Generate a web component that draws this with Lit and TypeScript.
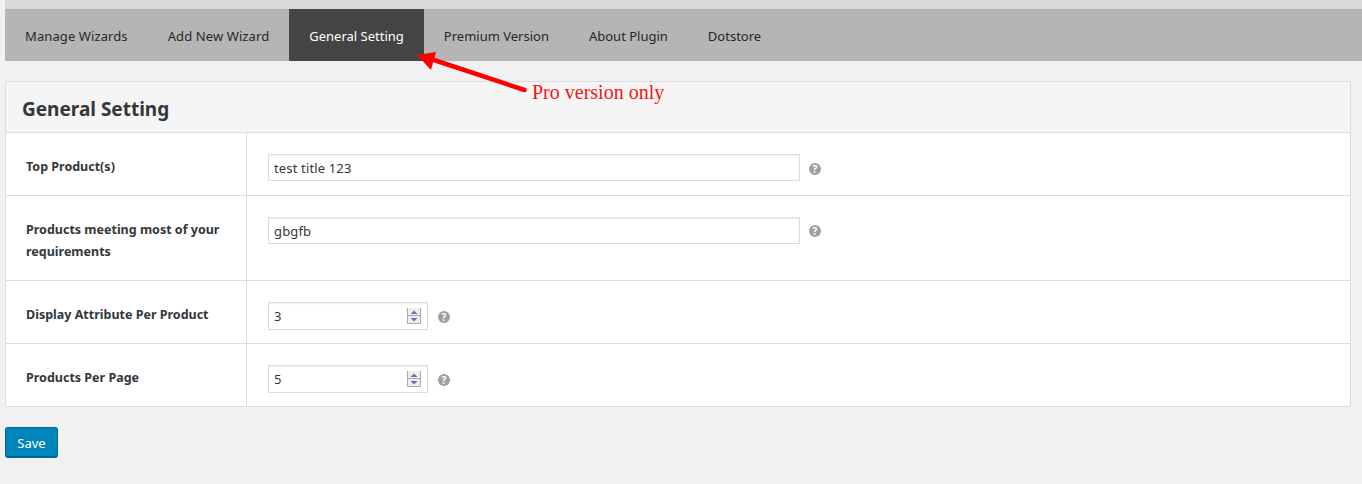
import { LitElement, html, css } from "lit";
import { customElement } from "lit/decorators.js";

const tabs = ["Manage Wizards", "Add New Wizard", "General Setting", "Premium Version", "About Plugin", "Dotstore"];

@customElement("app-root")
export class AppRoot extends LitElement {
  static styles = css`
    :host { display: block; position: relative; height: 484px; overflow: hidden; background: #f1f1f1; font-family: "Noto Sans", "Open Sans", sans-serif; font-size: 13px; color: #23282d; }
    .page { padding-left: 5px; }
    .strip { height: 9px; background: #d9d9d9; }
    nav { display: flex; height: 52px; background: #b5b5b5; }
    nav a { display: flex; align-items: center; padding: 2px 20px 0; color: #23282d; white-space: nowrap; }
    nav a:nth-child(-n+2) { letter-spacing: 0.1px; }
    nav a.on { background: #444; color: #fff; }
    .panel { width: 1344px; margin-top: 20px; border: 1px solid #ddd; background: #fff; }
    h2 { box-sizing: content-box; margin: 0; height: 47px; padding: 3px 0 0 16px; display: flex; align-items: center; background: #f5f5f5; border-bottom: 1px solid #ddd; font-size: 19px; font-weight: 700; color: #32373c; }
    .row { display: grid; grid-template-columns: 241px 1fr; border-bottom: 1px solid #ddd; }
    .row:last-child { border-bottom: 0; }
    .label { padding: 23px 20px 0 20px; border-right: 1px solid #ddd; font-weight: 700; font-size: 12.5px; line-height: 22px; color: #32373c; }
    .value { padding: 21px 0 0 21px; display: flex; align-items: flex-start; }
    .r1 { height: 62px; } .r2 { height: 84px; } .r3, .r4 { height: 62px; }
    input { box-sizing: border-box; width: 532px; height: 27px; border: 1px solid #ddd; padding: 0 5px; box-shadow: inset 0 1px 2px rgba(0,0,0,.07); font: 13px "Noto Sans", sans-serif; letter-spacing: 0.15px; color: #32373c; background: #fff; outline: 0; }
    .num { box-sizing: border-box; width: 160px; height: 28px; border: 1px solid #ddd; box-shadow: inset 0 1px 2px rgba(0,0,0,.07); display: flex; align-items: center; padding-right: 6px; background: #fff; }
    .num input { flex: 1; width: 0; height: 26px; border: 0; box-shadow: none; background: transparent; }
    .spin { width: 14px; height: 16px; flex: none; display: block; }
    .help { width: 12px; height: 12px; flex: none; margin: 9px 0 0 9px; border-radius: 50%; background: #a0a0a0; color: #fff; font: 700 10px/12px "Noto Sans", sans-serif; text-align: center; }
    .r2 .help { margin-top: 8px; }
    .num + .help { margin: 9px 0 0 10px; }
    button { display: block; margin-top: 20px; width: 53px; height: 31px; padding: 2px 0 0; background: #0085ba; border: 1px solid #006799; border-bottom-width: 2px; border-radius: 3px; color: #fff; font: 13px "Noto Sans", sans-serif; }
    .arrow { position: absolute; left: 410px; top: 45px; }
    .note { position: absolute; left: 532px; top: 80px; font: 20px/24px "Liberation Serif", serif; color: #f31414; white-space: nowrap; }
  `;

  private spin() {
    return html`<svg class="spin" viewBox="0 0 14 16">
      <rect x="0" y="0" width="14" height="16" fill="#eee"/>
      <path d="M0.5 0 V15.5 H13.5 V0" fill="none" stroke="#aaa"/>
      <rect x="1" y="7" width="12" height="1" fill="#aaa"/>
      <path d="M7 2.5 L10.5 6 H3.5 Z" fill="#6673b5"/>
      <path d="M3.5 10 H10.5 L7 13.5 Z" fill="#6673b5"/>
    </svg>`;
  }

  private num(v: string) {
    return html`<div class="num"><input type="text" .value=${v} />${this.spin()}</div><span class="help">?</span>`;
  }

  render() {
    return html`
      <div class="page">
        <div class="strip"></div>
        <nav>${tabs.map((t, i) => html`<a class=${i === 2 ? "on" : ""}>${t}</a>`)}</nav>
        <div class="panel">
          <h2>General Setting</h2>
          <div class="row r1"><div class="label">Top Product(s)</div><div class="value"><input .value=${"test title 123"} /><span class="help">?</span></div></div>
          <div class="row r2"><div class="label">Products meeting most of your requirements</div><div class="value"><input .value=${"gbgfb"} /><span class="help">?</span></div></div>
          <div class="row r3"><div class="label">Display Attribute Per Product</div><div class="value">${this.num("3")}</div></div>
          <div class="row r4"><div class="label">Products Per Page</div><div class="value">${this.num("5")}</div></div>
        </div>
        <button>Save</button>
      </div>
      <svg class="arrow" width="125" height="55" viewBox="410 45 125 55">
        <path d="M524.5 90 L434 60" stroke="#f00" stroke-width="4.5" stroke-linecap="round" fill="none"/>
        <path d="M417 55 L436 52 L431 70 Z" fill="#f00"/>
      </svg>
      <div class="note">Pro version only</div>
    `;
  }
}
